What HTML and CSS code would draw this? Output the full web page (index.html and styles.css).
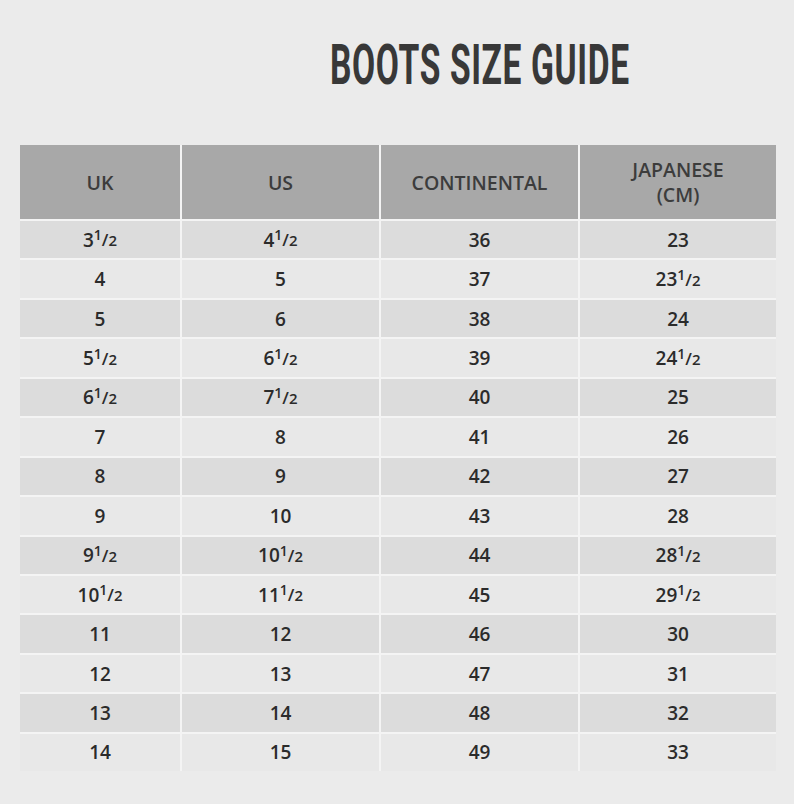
FILE: index.html
```html
<!DOCTYPE html>
<html>
<head>
<meta charset="utf-8">
<link rel="stylesheet" href="styles.css">
</head>
<body>
<div class="page">
  <div class="title-row"><h1 class="title">BOOTS SIZE GUIDE</h1></div>
  <div class="grid">
    <div class="head">UK</div><div class="head">US</div><div class="head">CONTINENTAL</div><div class="head">JAPANESE<br>(CM)</div>

    <div class="c odd">3<span class="fr"><span class="n">1</span>/<span class="d">2</span></span></div><div class="c odd">4<span class="fr"><span class="n">1</span>/<span class="d">2</span></span></div><div class="c odd">36</div><div class="c odd">23</div>
    <div class="c even">4</div><div class="c even">5</div><div class="c even">37</div><div class="c even">23<span class="fr"><span class="n">1</span>/<span class="d">2</span></span></div>
    <div class="c odd">5</div><div class="c odd">6</div><div class="c odd">38</div><div class="c odd">24</div>
    <div class="c even">5<span class="fr"><span class="n">1</span>/<span class="d">2</span></span></div><div class="c even">6<span class="fr"><span class="n">1</span>/<span class="d">2</span></span></div><div class="c even">39</div><div class="c even">24<span class="fr"><span class="n">1</span>/<span class="d">2</span></span></div>
    <div class="c odd">6<span class="fr"><span class="n">1</span>/<span class="d">2</span></span></div><div class="c odd">7<span class="fr"><span class="n">1</span>/<span class="d">2</span></span></div><div class="c odd">40</div><div class="c odd">25</div>
    <div class="c even">7</div><div class="c even">8</div><div class="c even">41</div><div class="c even">26</div>
    <div class="c odd">8</div><div class="c odd">9</div><div class="c odd">42</div><div class="c odd">27</div>
    <div class="c even">9</div><div class="c even">10</div><div class="c even">43</div><div class="c even">28</div>
    <div class="c odd">9<span class="fr"><span class="n">1</span>/<span class="d">2</span></span></div><div class="c odd">10<span class="fr"><span class="n">1</span>/<span class="d">2</span></span></div><div class="c odd">44</div><div class="c odd">28<span class="fr"><span class="n">1</span>/<span class="d">2</span></span></div>
    <div class="c even">10<span class="fr"><span class="n">1</span>/<span class="d">2</span></span></div><div class="c even">11<span class="fr"><span class="n">1</span>/<span class="d">2</span></span></div><div class="c even">45</div><div class="c even">29<span class="fr"><span class="n">1</span>/<span class="d">2</span></span></div>
    <div class="c odd">11</div><div class="c odd">12</div><div class="c odd">46</div><div class="c odd">30</div>
    <div class="c even">12</div><div class="c even">13</div><div class="c even">47</div><div class="c even">31</div>
    <div class="c odd">13</div><div class="c odd">14</div><div class="c odd">48</div><div class="c odd">32</div>
    <div class="c even">14</div><div class="c even">15</div><div class="c even">49</div><div class="c even">33</div>
  </div>
</div>
</body>
</html>
```
FILE: styles.css
```css
html, body {
  margin: 0;
  padding: 0;
  background: #ebebeb;
}
.page {
  width: 794px;
  height: 804px;
  padding: 0 18px 0 20px;
  box-sizing: border-box;
  font-family: "Open Sans", "DejaVu Sans", sans-serif;
}
.title-row {
  height: 145px;
  padding-left: 310px;
  box-sizing: border-box;
}
.title {
  margin: 0;
  padding-top: 31px;
  display: inline-block;
  font-family: Roboto, "Liberation Sans", sans-serif;
  font-weight: 700;
  font-size: 56px;
  line-height: 68px;
  color: #383838;
  letter-spacing: 1px;
  transform: scaleX(0.6);
  transform-origin: left center;
  white-space: nowrap;
}
.grid {
  display: grid;
  grid-template-columns: 160px 197px 197px 196px;
  grid-template-rows: 74px;
  grid-auto-rows: 37.45px;
  gap: 2px;
  background: #f4f4f4;
  width: 756px;
}
.head {
  background: #a8a8a8;
  color: #3c3c3c;
  font-weight: 600;
  font-size: 19.5px;
  line-height: 25px;
  display: flex;
  align-items: center;
  justify-content: center;
  text-align: center;
}
.c {
  display: flex;
  align-items: center;
  justify-content: center;
  font-weight: 600;
  font-size: 19px;
  color: #2b2b2b;
}
.odd { background: #dcdcdc; }
.even { background: #e8e8e8; }
.fr {
  font-size: 17px;
  display: inline-flex;
  align-items: baseline;
}
.fr .n {
  font-size: 14px;
  position: relative;
  top: -6px;
}
.fr .d {
  font-size: 15px;
}
```
